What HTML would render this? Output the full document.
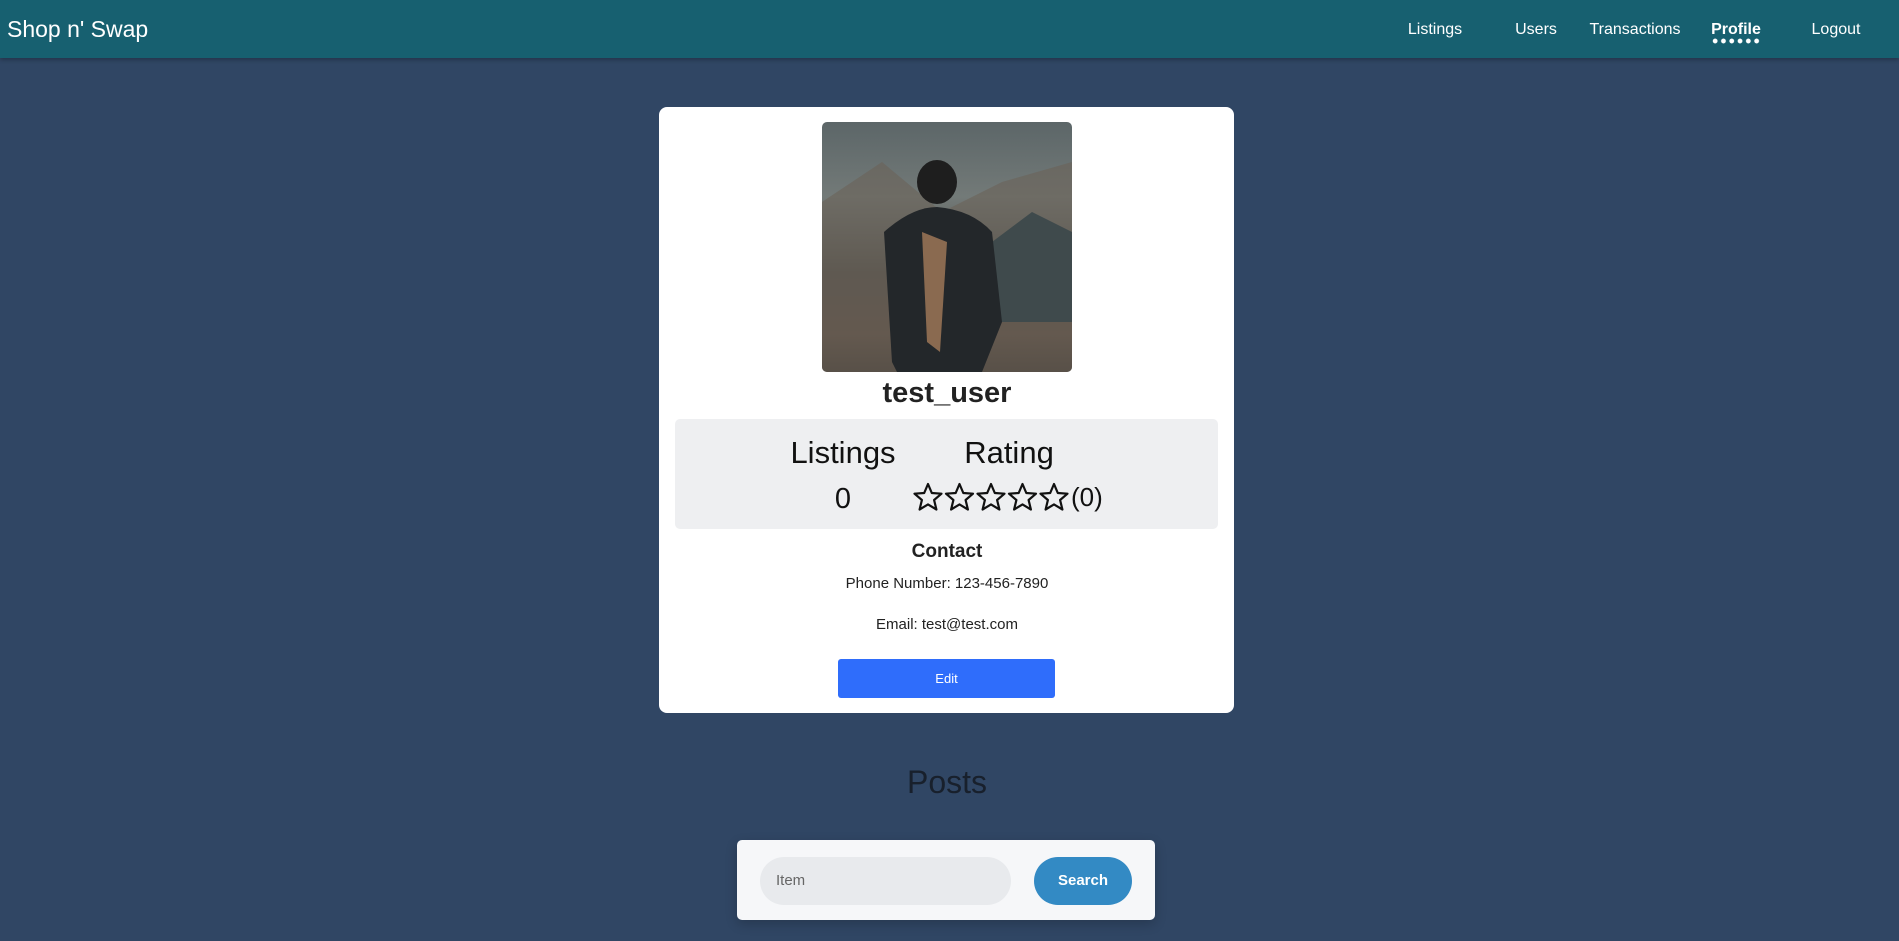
<!DOCTYPE html>
<html><head><meta charset="utf-8"><style>
*{box-sizing:border-box;margin:0;padding:0}
body{width:1899px;height:941px;overflow:hidden;background:#304664;font-family:"Liberation Sans",sans-serif;position:relative}
.nav{position:absolute;left:0;top:0;width:1899px;height:58px;background:#176070;box-shadow:0 2px 4px rgba(0,0,0,.25)}
.brand{position:absolute;left:7px;top:16px;font-size:23px;color:#fff}
.nl{position:absolute;top:21px;font-size:16px;color:#fff;transform:translateX(-50%);white-space:nowrap}
.dots{position:absolute;left:1711px;top:38px;width:50px;height:6px;background:radial-gradient(circle,#fff 2.2px,transparent 2.6px) 0 0/8.3px 6px repeat-x}
.card{position:absolute;left:659px;top:107px;width:575px;height:606px;background:#fff;border-radius:8px}
.img{position:absolute;left:822px;top:122px;width:250px;height:250px;border-radius:5px;overflow:hidden;background:linear-gradient(180deg,#5c6668 0%,#737a78 30%,#4e4d48 60%,#5a4c42 85%,#3d3630 100%)}
.c{position:absolute;transform:translateX(-50%);white-space:nowrap;text-align:center}
.gray{position:absolute;left:675px;top:419px;width:543px;height:110px;background:#eeeff1;border-radius:5px}
.edit{position:absolute;left:838px;top:659px;width:217px;height:39px;background:#2f6dfb;border-radius:3px;color:#fff;font-size:13px;text-align:center;line-height:39px}
.sbox{position:absolute;left:737px;top:840px;width:418px;height:80px;background:#f6f7f9;border-radius:5px;box-shadow:0 4px 12px rgba(0,0,0,.2)}
.inp{position:absolute;left:760px;top:857px;width:251px;height:48px;background:#e8eaed;border-radius:24px;font-size:15px;color:#666;padding-left:16px;line-height:48px}
.sbtn{position:absolute;left:1034px;top:857px;width:98px;height:48px;background:#338ac4;border-radius:24px;color:#fff;font-weight:bold;font-size:15px;text-align:center;line-height:48px}
</style></head><body>
<div class="nav">
<div class="brand">Shop n' Swap</div>
<div class="nl" style="left:1435px">Listings</div>
<div class="nl" style="left:1536px">Users</div>
<div class="nl" style="left:1635px">Transactions</div>
<div class="nl" style="left:1736px;font-weight:bold">Profile</div>
<div class="nl" style="left:1836px">Logout</div>
<div class="dots"></div>
</div>
<div class="card"></div>
<div class="img"><svg width="250" height="250">
<path d="M0 80 L60 40 L120 90 L180 60 L250 40 L250 250 L0 250Z" fill="#6a6258" opacity=".6"/>
<path d="M170 120 L210 90 L250 110 L250 200 L160 200Z" fill="#3f4a4c"/>
<ellipse cx="115" cy="60" rx="20" ry="22" fill="#1e1e1e"/>
<path d="M70 240 L62 110 Q90 85 115 85 Q150 88 170 110 L180 200 L160 250 L75 250Z" fill="#23272a"/>
<path d="M100 110 L125 120 L118 230 L105 220Z" fill="#8a6a50"/>
</svg></div>
<div class="c" style="left:947px;top:377px;font-size:29px;font-weight:bold;color:#222">test_user</div>
<div class="gray"></div>
<div class="c" style="left:843px;top:435px;font-size:31px;color:#111">Listings</div>
<div class="c" style="left:1009px;top:435px;font-size:31px;color:#111">Rating</div>
<div class="c" style="left:843px;top:483px;font-size:29px;color:#111">0</div>
<svg style="position:absolute;left:913px;top:482px" width="158" height="30" viewBox="0 0 158 30">
<g fill="none" stroke="#111" stroke-width="2.2" stroke-linejoin="round">
<path id="s" d="M15 2 L18.8 11 L28.5 11.7 L21.1 18 L23.4 27.5 L15 22.4 L6.6 27.5 L8.9 18 L1.5 11.7 L11.2 11Z"/>
<use href="#s" x="31.5"/><use href="#s" x="63"/><use href="#s" x="94.5"/><use href="#s" x="126"/>
</g></svg>
<div style="position:absolute;left:1071px;top:482px;font-size:26px;color:#111">(0)</div>
<div class="c" style="left:947px;top:541px;font-size:19px;font-weight:bold;color:#222">Contact</div>
<div class="c" style="left:947px;top:575px;font-size:15px;color:#222">Phone Number: 123-456-7890</div>
<div class="c" style="left:947px;top:616px;font-size:15px;color:#222">Email: test@test.com</div>
<div class="edit">Edit</div>
<div class="c" style="left:947px;top:764px;font-size:32px;color:#18202c">Posts</div>
<div class="sbox"></div>
<div class="inp">Item</div>
<div class="sbtn">Search</div>
</body></html>
